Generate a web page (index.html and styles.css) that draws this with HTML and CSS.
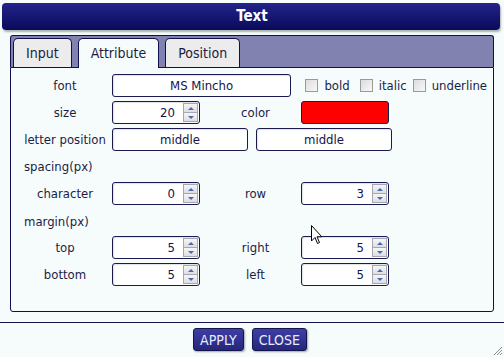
FILE: index.html
```html
<!DOCTYPE html>
<html lang="en">
<head>
    <meta charset="UTF-8">
    <title>Text</title>
    <link rel="stylesheet" href="styles.css">
</head>
<body>
    <div class="dialog">
        <div class="titlebar">Text</div>

        <div class="tabs">
            <div class="tabbar">
                <div class="tab">Input</div>
                <div class="tab active">Attribute</div>
                <div class="tab">Position</div>
            </div>
            <div class="panel">
                <div class="row">
                    <span class="lbl">font</span>
                    <div class="field fontName">MS Mincho</div>
                    <div class="checks">
                        <span class="check"><span class="box"></span>bold</span>
                        <span class="check"><span class="box"></span>italic</span>
                        <span class="check"><span class="box"></span>underline</span>
                    </div>
                </div>
                <div class="row">
                    <span class="lbl">size</span>
                    <div class="spin"><span class="val">20</span><span class="arrows"><span class="arr up"></span><span class="arr down"></span></span></div>
                    <span class="lbl2">color</span>
                    <div class="swatch"></div>
                </div>
                <div class="row">
                    <span class="lbl">letter position</span>
                    <div class="field pos">middle</div>
                    <div class="field pos">middle</div>
                </div>

                <div class="heading">spacing(px)</div>
                <div class="row">
                    <span class="lbl">character</span>
                    <div class="spin"><span class="val">0</span><span class="arrows"><span class="arr up"></span><span class="arr down"></span></span></div>
                    <span class="lbl2">row</span>
                    <div class="spin"><span class="val">3</span><span class="arrows"><span class="arr up"></span><span class="arr down"></span></span></div>
                </div>

                <div class="heading second">margin(px)</div>
                <div class="row">
                    <span class="lbl">top</span>
                    <div class="spin"><span class="val">5</span><span class="arrows"><span class="arr up"></span><span class="arr down"></span></span></div>
                    <span class="lbl2">right</span>
                    <div class="spin"><span class="val">5</span><span class="arrows"><span class="arr up"></span><span class="arr down"></span></span></div>
                </div>
                <div class="row">
                    <span class="lbl">bottom</span>
                    <div class="spin"><span class="val">5</span><span class="arrows"><span class="arr up"></span><span class="arr down"></span></span></div>
                    <span class="lbl2">left</span>
                    <div class="spin"><span class="val">5</span><span class="arrows"><span class="arr up"></span><span class="arr down"></span></span></div>
                </div>
            </div>
        </div>

        <div class="footer">
            <button class="btn">APPLY</button>
            <button class="btn">CLOSE</button>
        </div>

        <svg class="grip" width="12" height="12" viewBox="0 0 12 12">
            <path d="M11 3 L3 11 M11 6 L6 11 M11 9 L9 11" stroke="#8a8a8a" stroke-width="1"/>
        </svg>

        <svg class="cursor" width="12" height="20" viewBox="0 0 12 20">
            <path d="M0.5 0.5 L0.5 16 L4 12.5 L6.5 18.5 L8.5 17.5 L6 11.8 L10.8 11.8 Z" fill="#fff" stroke="#000" stroke-width="1" stroke-linejoin="round"/>
        </svg>
    </div>
</body>
</html>
```
FILE: styles.css
```css
body {
    margin: 0;
    background: #f6fcfc;
    font-family: "DejaVu Sans Condensed", "DejaVu Sans", sans-serif;
    font-size: 13px;
    color: #1c1c48;
}
.dialog {
    width: 504px;
    height: 357px;
    position: relative;
    overflow: hidden;
}
.titlebar {
    margin: 3px 4px 0 2px;
    height: 27px;
    line-height: 27px;
    border-radius: 4px;
    background: linear-gradient(#23238a, #0a0a5c);
    box-shadow: 1px 2px 2px rgba(0, 0, 0, 0.3);
    color: #fff;
    font-weight: bold;
    font-size: 15px;
    text-align: center;
    padding-left: 2px;
}
.tabs {
    margin: 5px 10px 0 10px;
}
.tabbar {
    display: flex;
    gap: 6px;
    height: 32px;
    padding: 2px 0 0 2px;
    background: #8282b0;
    border: 1px solid #10104e;
    border-bottom: none;
    border-radius: 3px 3px 0 0;
    box-sizing: border-box;
    align-items: flex-end;
}
.tab {
    height: 29px;
    line-height: 28px;
    padding: 0 12px;
    font-size: 14px;
    background: #ececec;
    border: 1px solid #10104e;
    border-bottom: none;
    border-radius: 5px 5px 0 0;
    box-sizing: border-box;
    color: #1c1c40;
}
.tab.active {
    height: 30px;
    margin-bottom: -1px;
    background: #f6fcfc;
    position: relative;
}
.panel {
    height: 245px;
    box-sizing: border-box;
    border: 1px solid #10104e;
    border-radius: 0 0 3px 3px;
    padding: 6px 0 0 9px;
}
.row {
    display: flex;
    align-items: center;
    height: 23px;
    margin-bottom: 4px;
}
.lbl {
    width: 90px;
    margin-right: 2px;
    text-align: center;
    white-space: nowrap;
}
.lbl2 {
    width: 91px;
    margin-left: 10px;
    text-align: center;
}
.field, .spin, .swatch {
    height: 23px;
    box-sizing: border-box;
    border: 1px solid #1a1a50;
    border-radius: 3px;
    background: #fff;
    box-shadow: inset 1px 1px 1px rgba(0, 0, 0, 0.12);
}
.field {
    display: flex;
    align-items: center;
    justify-content: center;
    color: #14144a;
}
.fontName {
    width: 180px;
}
.pos {
    width: 136px;
    margin-right: 8px;
}
.checks {
    display: flex;
    margin-left: 14px;
}
.check {
    display: flex;
    align-items: center;
    margin-right: 6px;
}
.check:first-child {
    margin-right: 10px;
}
.box {
    width: 11px;
    height: 11px;
    border: 1px solid #9a9a9a;
    background: linear-gradient(135deg, #dcdcdc, #f8f8f8);
    margin-right: 6px;
}
.spin {
    width: 88px;
    display: flex;
    align-items: center;
    justify-content: flex-end;
    padding-right: 1px;
}
.val {
    margin-right: 8px;
    color: #14144a;
}
.arrows {
    width: 15px;
    height: 19px;
    display: flex;
    flex-direction: column;
}
.arr {
    flex: 1;
    border: 1px solid #a6a6b6;
    background: linear-gradient(#f6f6f6, #dedee2);
    display: flex;
    align-items: center;
    justify-content: center;
}
.arr.up {
    border-bottom: none;
}
.arr::after {
    content: "";
    border-left: 3px solid transparent;
    border-right: 3px solid transparent;
}
.arr.up::after {
    border-bottom: 3px solid #4a68b0;
}
.arr.down::after {
    border-top: 3px solid #4a68b0;
}
.swatch {
    width: 88px;
    background: #ff0000;
    box-shadow: none;
}
.heading {
    height: 16px;
    line-height: 16px;
    margin: 8px 0 7px 4px;
}
.heading.second {
    margin: 9px 0 6px 4px;
}
.footer {
    margin-top: 10px;
    border-top: 1px solid #14144e;
    display: flex;
    justify-content: center;
    gap: 8px;
    padding: 5px 4px 0 0;
}
.btn {
    height: 23px;
    padding: 0 6px;
    font-family: inherit;
    font-size: 14px;
    color: #e6ecff;
    background: linear-gradient(#3e3ea4, #26267c);
    border: 1px solid #14144e;
    border-radius: 3px;
    box-shadow: 1px 1px 2px rgba(0, 0, 0, 0.35);
}
.grip {
    position: absolute;
    right: 1px;
    bottom: 1px;
}
.cursor {
    position: absolute;
    left: 311px;
    top: 225px;
}
```
